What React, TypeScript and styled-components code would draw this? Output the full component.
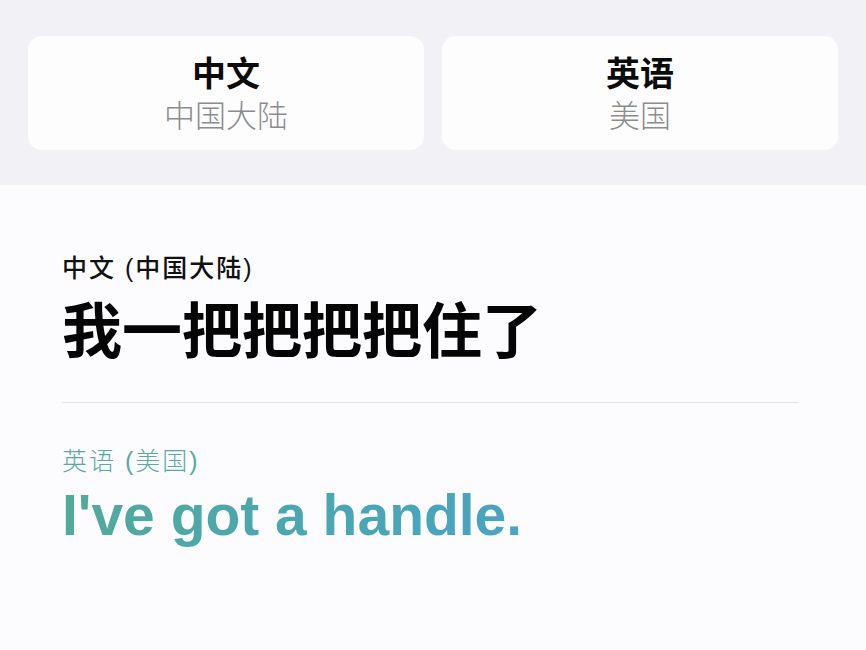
import styled, { createGlobalStyle } from "styled-components";

const GlobalStyle = createGlobalStyle`
  html, body {
    margin: 0;
    padding: 0;
    background: #f2f1f6;
  }
  body {
    font-family: "Liberation Sans", "Noto Sans CJK SC", sans-serif;
    -webkit-font-smoothing: antialiased;
  }
`;

const Page = styled.div`
  min-height: 650px;
  display: flex;
  flex-direction: column;
`;

const LanguageBar = styled.div`
  display: grid;
  grid-template-columns: 1fr 1fr;
  gap: 18px;
  padding: 36px 28px 0;
`;

const LanguageCard = styled.button`
  height: 114px;
  border: none;
  border-radius: 14px;
  background: #fdfdfe;
  display: flex;
  flex-direction: column;
  align-items: center;
  padding: 19px 0 0;
  font-family: "Liberation Sans", "Noto Sans CJK SC", sans-serif;
  cursor: pointer;
`;

const CardTitle = styled.span`
  font-size: 34px;
  line-height: 1.15;
  font-weight: 700;
  color: #0b0b0b;
`;

const CardSubtitle = styled.span`
  margin-top: 5px;
  font-size: 31px;
  line-height: 1.15;
  font-weight: 300;
  color: #8c8c8e;
`;

const TranslationPanel = styled.section`
  flex: 1;
  margin-top: 35px;
  background: #fcfcfe;
  padding: 67px 68px 40px 62px;
`;

const LangLabel = styled.div<{ $accent?: boolean }>`
  font-family: "Liberation Sans", "Noto Sans CJK SC", sans-serif;
  font-size: 25px;
  line-height: 1.3;
  letter-spacing: 2px;
  font-weight: ${({ $accent }) => ($accent ? 300 : 500)};
  color: ${({ $accent }) => ($accent ? "#58a9a6" : "#111")};
`;

const SourceText = styled.div`
  margin-top: 3px;
  font-family: "Noto Sans CJK SC", sans-serif;
  font-size: 60px;
  line-height: 1.3;
  font-weight: 700;
  color: #050505;
`;

const Divider = styled.hr`
  margin: 36px 0 42px;
  border: none;
  height: 1px;
  background: #e3e3e6;
`;

const TargetText = styled.div`
  margin-top: 4px;
  font-family: "Liberation Sans", "Helvetica", sans-serif;
  font-size: 57px;
  line-height: 1.2;
  font-weight: 700;
  display: inline-block;
  background: linear-gradient(90deg, #52aa98 0%, #4ba7ad 45%, #48a4c2 100%);
  -webkit-background-clip: text;
  background-clip: text;
  color: transparent;
`;

export default function App() {
  return (
    <Page>
      <GlobalStyle />
      <LanguageBar>
        <LanguageCard>
          <CardTitle>中文</CardTitle>
          <CardSubtitle>中国大陆</CardSubtitle>
        </LanguageCard>
        <LanguageCard>
          <CardTitle>英语</CardTitle>
          <CardSubtitle>美国</CardSubtitle>
        </LanguageCard>
      </LanguageBar>
      <TranslationPanel>
        <LangLabel>中文 (中国大陆)</LangLabel>
        <SourceText>我一把把把把住了</SourceText>
        <Divider />
        <LangLabel $accent>英语 (美国)</LangLabel>
        <TargetText>I've got a handle.</TargetText>
      </TranslationPanel>
    </Page>
  );
}
